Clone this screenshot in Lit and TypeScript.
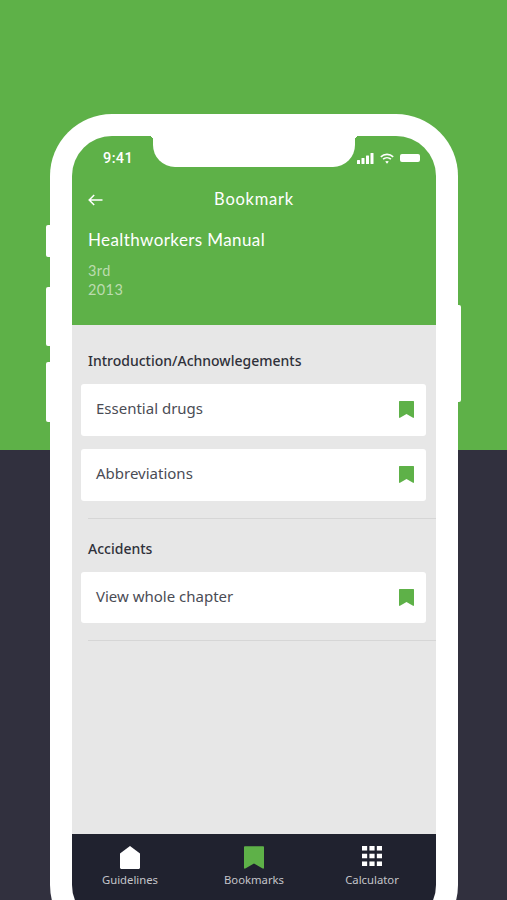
import { LitElement, html, css, svg } from 'lit'
import { customElement } from 'lit/decorators.js'

const bookmarkIcon = (w: number, h: number) => html`
  <svg class="mark" width=${w} height=${h} viewBox="0 0 15 17">
    <path d="M.6 0h13.8c.3 0 .6.3.6.6v15.6c0 .6-.5.9-1 .6L7.5 13 1 16.8c-.5.3-1 0-1-.6V.6C0 .3.3 0 .6 0z" fill="#5eb148" />
  </svg>
`

const gridCells = [0, 7.2, 14.4].flatMap((x) =>
  [0, 7.5, 15].map((y) => svg`<rect x=${x} y=${y} width="5" height="4.4" fill="#fff" />`)
)

interface Section {
  title: string
  items: string[]
}

const sections: Section[] = [
  { title: 'Introduction/Achnowlegements', items: ['Essential drugs', 'Abbreviations'] },
  { title: 'Accidents', items: ['View whole chapter'] }
]

@customElement('app-root')
export class AppRoot extends LitElement {
  render() {
    return html`
      <div class="page">
        <div class="phone">
          <span class="side-btn left b1"></span>
          <span class="side-btn left b2"></span>
          <span class="side-btn left b3"></span>
          <span class="side-btn right b4"></span>
          <div class="screen">
            <div class="notch"></div>
            <header class="header">
              <div class="status">
                <span class="time">9:41</span>
                <div class="status-icons">
                  <svg width="17" height="11" viewBox="0 0 17 11" fill="#fff">
                    <rect x="0" y="7" width="3" height="4" rx=".5" />
                    <rect x="4.5" y="5" width="3" height="6" rx=".5" />
                    <rect x="9" y="2.5" width="3" height="8.5" rx=".5" />
                    <rect x="13.5" y="0" width="3" height="11" rx=".5" />
                  </svg>
                  <svg width="14" height="11" viewBox="0 0 14 11" fill="none" stroke="#fff" stroke-width="1.6">
                    <path d="M.8 3.8C4.3.5 9.7.5 13.2 3.8" />
                    <path d="M3.1 6.2c2.2-2 5.6-2 7.8 0" />
                    <path d="M7 10.8 5.2 8.6c1-.9 2.6-.9 3.6 0z" fill="#fff" stroke="none" />
                  </svg>
                  <div class="battery"></div>
                </div>
              </div>
              <div class="title-row">
                <svg class="back" width="15" height="12" viewBox="0 0 15 12" fill="none" stroke="#fff" stroke-width="1.5">
                  <path d="M14.5 6H1.2M6.2 1 1.2 6l5 5" />
                </svg>
                <span class="title">Bookmark</span>
              </div>
              <div class="book">Healthworkers Manual</div>
              <div class="meta">3rd<br />2013</div>
            </header>

            <main class="content">
              ${sections.map(
                (s) => html`
                  <section class="section">
                    <h2>${s.title}</h2>
                    <div class="rows">
                      ${s.items.map(
                        (item) => html`
                          <div class="row">
                            <span class="label">${item}</span>
                            ${bookmarkIcon(15, 17)}
                          </div>
                        `
                      )}
                    </div>
                    <div class="divider"></div>
                  </section>
                `
              )}
            </main>

            <nav class="nav">
              <div class="tab">
                <svg width="20" height="23" viewBox="0 0 20 23">
                  <path d="M10 0 20 7.5V21.5c0 .8-.7 1.5-1.5 1.5h-17C.7 23 0 22.300 0 21.500V7.500z" fill="#fff" />
                </svg>
                <span>Guidelines</span>
              </div>
              <div class="tab">
                ${bookmarkIcon(20, 23)}
                <span>Bookmarks</span>
              </div>
              <div class="tab">
                <svg width="20" height="20" viewBox="0 0 19.400 19.400" class="grid">${gridCells}</svg>
                <span>Calculator</span>
              </div>
            </nav>
          </div>
        </div>
      </div>
    `
  }

  static styles = css`
    :host {
      display: block;
      width: 507px;
      height: 900px;
      overflow: hidden;
      font-family: 'Noto Sans', sans-serif;
    }

    .page {
      height: 900px;
      box-sizing: border-box;
      padding: 114px 49px 0 50px;
      background: linear-gradient(#5eb148 0 450px, #31303e 450px);
      overflow: hidden;
    }

    .phone {
      position: relative;
      box-sizing: border-box;
      width: 408px;
      height: 833px;
      padding: 22px;
      background: #fff;
      border-radius: 62px;
    }

    .side-btn {
      position: absolute;
      width: 5px;
      background: #fff;
    }

    .side-btn.left {
      left: -4px;
      border-radius: 2px 0 0 2px;
    }

    .side-btn.right {
      right: -3px;
      border-radius: 0 2px 2px 0;
    }

    .b1 { top: 111px; height: 32px; }
    .b2 { top: 173px; height: 59px; }
    .b3 { top: 248px; height: 60px; }
    .b4 { top: 191px; height: 97px; }

    .screen {
      position: relative;
      display: flex;
      flex-direction: column;
      height: 789px;
      border-radius: 40px;
      overflow: hidden;
      background: #e7e7e7;
    }

    .notch {
      position: absolute;
      top: 0;
      left: 81px;
      width: 202px;
      height: 31px;
      background: #fff;
      border-radius: 0 0 22px 22px;
    }

    .notch::before,
    .notch::after {
      content: '';
      position: absolute;
      top: 0;
      width: 4px;
      height: 4px;
    }

    .notch::before {
      left: -4px;
      background: radial-gradient(circle at 0 100%, transparent 4px, #fff 4px);
    }

    .notch::after {
      right: -4px;
      background: radial-gradient(circle at 100% 100%, transparent 4px, #fff 4px);
    }

    .header {
      box-sizing: border-box;
      height: 189px;
      padding: 14px 16px 0;
      background: #5eb148;
      color: #fff;
    }

    .status {
      display: flex;
      justify-content: space-between;
      align-items: center;
      height: 16px;
      padding: 0 0 0 15px;
    }

    .time {
      font-family: Roboto, sans-serif;
      font-size: 14.5px;
      font-weight: 500;
      letter-spacing: 0.4px;
    }

    .status-icons {
      display: flex;
      align-items: center;
      gap: 6px;
    }

    .battery {
      width: 20px;
      height: 8px;
      background: #fff;
      border-radius: 2px;
    }

    .title-row {
      position: relative;
      display: flex;
      align-items: center;
      justify-content: center;
      height: 24px;
      margin-top: 21px;
    }

    .back {
      position: absolute;
      left: 0;
      top: 7px;
    }

    .title {
      font-family: Lato, sans-serif;
      font-size: 16.5px;
      letter-spacing: 0.75px;
    }

    .book {
      margin-top: 17px;
      font-family: Lato, sans-serif;
      font-size: 17px;
      line-height: 24px;
      letter-spacing: 0.4px;
    }

    .meta {
      margin-top: 9px;
      font-family: Lato, sans-serif;
      font-size: 14.5px;
      line-height: 19px;
      letter-spacing: 0.4px;
      color: #bcdcaf;
    }

    .content {
      flex: 1;
      padding: 25px 0 0 9px;
    }

    .section + .section {
      margin-top: 19px;
    }

    h2 {
      margin: 0 0 12px 7px;
      font-size: 14px;
      line-height: 22px;
      font-weight: 500;
      color: #2f313a;
    }

    .rows {
      display: flex;
      flex-direction: column;
      gap: 13.5px;
      margin-right: 10px;
    }

    .row {
      display: flex;
      align-items: center;
      justify-content: space-between;
      height: 51.5px;
      padding: 0 12px 0 15px;
      background: #fff;
      border-radius: 3px;
      font-size: 15px;
      color: #4a4c55;
    }

    .label {
      padding-bottom: 3px;
    }

    .divider {
      height: 1px;
      margin: 17px 0 0 7px;
      background: #d6d6d6;
    }

    .nav {
      display: grid;
      grid-template-columns: 116px 132px 104px;
      box-sizing: border-box;
      height: 91px;
      padding: 12px 12px 0 0;
      background: #20222f;
    }

    .tab {
      display: flex;
      flex-direction: column;
      align-items: center;
      gap: 3px;
      font-size: 11.3px;
      line-height: 16px;
      color: #c4c5ca;
    }

    .tab .grid {
      margin-bottom: 3px;
    }
  `
}

declare global {
  interface HTMLElementTagNameMap {
    'app-root': AppRoot
  }
}
